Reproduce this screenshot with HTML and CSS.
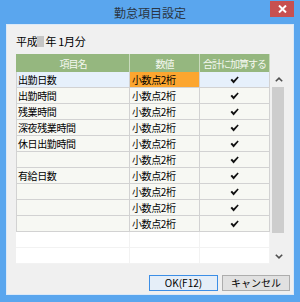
FILE: index.html
```html
<!DOCTYPE html>
<html lang="ja">
<head>
<meta charset="utf-8">
<title>勤怠項目設定</title>
<link rel="stylesheet" href="styles.css">
</head>
<body>
<div class="window">
  <div class="titlebar">
    <span class="title">勤怠項目設定</span>
    <div class="close"><svg width="9" height="8" viewBox="0 0 9 8"><path d="M1 0.5 L8 7.5 M8 0.5 L1 7.5" stroke="#fff" stroke-width="2"/></svg></div>
  </div>
  <div class="client">
    <div class="period">平成<span class="redact"></span>年 1月分</div>
    <div class="gridwrap">
      <div class="grid">
        <div class="hd">項目名</div><div class="hd">数値</div><div class="hd">合計に加算する</div>

        <div class="c sel">出勤日数</div><div class="c val">小数点2桁</div><div class="c sel chk"><svg class="ck" viewBox="0 0 9 8"><path d="M0.5 4 L2 2.8 L3.6 4.6 L7.6 0.5 L8.7 1.6 L3.6 7.4 Z" fill="#111"/></svg></div>

        <div class="c">出勤時間</div><div class="c">小数点2桁</div><div class="c chk"><svg class="ck" viewBox="0 0 9 8"><path d="M0.5 4 L2 2.8 L3.6 4.6 L7.6 0.5 L8.7 1.6 L3.6 7.4 Z" fill="#111"/></svg></div>

        <div class="c">残業時間</div><div class="c">小数点2桁</div><div class="c chk"><svg class="ck" viewBox="0 0 9 8"><path d="M0.5 4 L2 2.8 L3.6 4.6 L7.6 0.5 L8.7 1.6 L3.6 7.4 Z" fill="#111"/></svg></div>

        <div class="c">深夜残業時間</div><div class="c">小数点2桁</div><div class="c chk"><svg class="ck" viewBox="0 0 9 8"><path d="M0.5 4 L2 2.8 L3.6 4.6 L7.6 0.5 L8.7 1.6 L3.6 7.4 Z" fill="#111"/></svg></div>

        <div class="c">休日出勤時間</div><div class="c">小数点2桁</div><div class="c chk"><svg class="ck" viewBox="0 0 9 8"><path d="M0.5 4 L2 2.8 L3.6 4.6 L7.6 0.5 L8.7 1.6 L3.6 7.4 Z" fill="#111"/></svg></div>

        <div class="c"></div><div class="c">小数点2桁</div><div class="c chk"><svg class="ck" viewBox="0 0 9 8"><path d="M0.5 4 L2 2.8 L3.6 4.6 L7.6 0.5 L8.7 1.6 L3.6 7.4 Z" fill="#111"/></svg></div>

        <div class="c">有給日数</div><div class="c">小数点2桁</div><div class="c chk"><svg class="ck" viewBox="0 0 9 8"><path d="M0.5 4 L2 2.8 L3.6 4.6 L7.6 0.5 L8.7 1.6 L3.6 7.4 Z" fill="#111"/></svg></div>

        <div class="c"></div><div class="c">小数点2桁</div><div class="c chk"><svg class="ck" viewBox="0 0 9 8"><path d="M0.5 4 L2 2.8 L3.6 4.6 L7.6 0.5 L8.7 1.6 L3.6 7.4 Z" fill="#111"/></svg></div>

        <div class="c"></div><div class="c">小数点2桁</div><div class="c chk"><svg class="ck" viewBox="0 0 9 8"><path d="M0.5 4 L2 2.8 L3.6 4.6 L7.6 0.5 L8.7 1.6 L3.6 7.4 Z" fill="#111"/></svg></div>

        <div class="c"></div><div class="c">小数点2桁</div><div class="c chk"><svg class="ck" viewBox="0 0 9 8"><path d="M0.5 4 L2 2.8 L3.6 4.6 L7.6 0.5 L8.7 1.6 L3.6 7.4 Z" fill="#111"/></svg></div>

        <div class="e"></div><div class="e"></div><div class="e"></div>
        <div class="e"></div><div class="e"></div><div class="e"></div>
      </div>
      <div class="scrollbar">
        <div class="sbtn"><svg width="8" height="5" viewBox="0 0 8 5"><path d="M0.8 4.3 L4 1.2 L7.2 4.3" fill="none" stroke="#505050" stroke-width="1.6"/></svg></div>
        <div class="track"><div class="thumb"></div></div>
        <div class="sbtn"><svg width="8" height="5" viewBox="0 0 8 5"><path d="M0.8 0.7 L4 3.8 L7.2 0.7" fill="none" stroke="#505050" stroke-width="1.6"/></svg></div>
      </div>
    </div>
    <div class="buttons">
      <button class="btn ok">OK(F12)</button>
      <button class="btn">キャンセル</button>
    </div>
  </div>
</div>
</body>
</html>
```

FILE: styles.css
```css
* { box-sizing: border-box; }
html, body { margin: 0; padding: 0; }
body {
  width: 300px;
  height: 302px;
  font-family: "Noto Sans CJK JP", "Noto Sans", sans-serif;
  background: #5aa6ee;
}
.window {
  width: 300px;
  height: 302px;
  background: #5aa6ee;
  display: flex;
  flex-direction: column;
  padding: 0 6px 7px 6px;
  position: relative;
}
.titlebar {
  height: 24px;
  display: flex;
  align-items: center;
  justify-content: center;
}
.title {
  font-size: 12px;
  line-height: 14px;
  color: #2a3644;
  margin-top: 1px;
}
.close {
  position: absolute;
  top: 1px;
  right: 6px;
  width: 24px;
  height: 16px;
  background: #c75050;
  display: flex;
  align-items: center;
  justify-content: center;
}
.client {
  flex: 1;
  background: #f0f0f0;
  border: 1px solid #dbe9f8;
  display: flex;
  flex-direction: column;
  padding: 0 0 0 9px;
}
.period {
  font-size: 11px;
  line-height: 13px;
  color: #000;
  margin-top: 10px;
  height: 13px;
  display: flex;
  align-items: center;
  letter-spacing: -0.3px;
}
.redact {
  display: inline-block;
  width: 7px;
  height: 11px;
  background: #c4c4c4;
  margin: 0 1px 0 0;
}
.gridwrap {
  display: flex;
  margin-top: 6px;
}
.grid {
  width: 254px;
  display: grid;
  grid-template-columns: 114px 70px 70px;
  grid-template-rows: 18px repeat(12, 16px);
  font-size: 10px;
  line-height: 15px;
  letter-spacing: -0.4px;
  color: #000;
}
.hd {
  background: #95b77f;
  color: #f4f8f0;
  display: flex;
  align-items: center;
  justify-content: center;
  border-right: 1px solid #c9dbbd;
  font-size: 10px;
  white-space: nowrap;
  letter-spacing: -1px;
}
.hd:first-child { border-left: 1px solid #95b77f; }
.c {
  background: #f7f8f3;
  border-right: 1px solid #d2d2d2;
  border-bottom: 1px solid #d2d2d2;
  padding-left: 2px;
  white-space: nowrap;
  overflow: hidden;
}
.c:nth-child(3n+1) { border-left: 1px solid #d2d2d2; padding-left: 1px; }
.c.sel { background: #e6f0fb; }
.c.val { background: #fca62f; }
.chk {
  display: flex;
  align-items: center;
  justify-content: center;
  padding-left: 0;
}
.ck { width: 9px; height: 8px; }
.e {
  background: #fff;
  border-right: 1px solid #f2f2f2;
  border-bottom: 1px solid #f2f2f2;
}
.scrollbar {
  width: 17px;
  margin-top: 18px;
  height: 192px;
  background: #f0f0f0;
  display: flex;
  flex-direction: column;
}
.sbtn {
  height: 15px;
  display: flex;
  align-items: center;
  justify-content: center;
}
.track {
  flex: 1;
  padding: 0 3px 0 2px;
  display: flex;
  flex-direction: column;
}
.thumb {
  height: 146px;
  background: #cdcdcd;
}
.buttons {
  display: flex;
  justify-content: flex-end;
  gap: 4px;
  margin-top: 11px;
  padding-right: 3px;
}
.btn {
  font-family: "Noto Sans CJK JP", "Noto Sans", sans-serif;
  font-size: 10px;
  line-height: 14px;
  height: 16px;
  width: 68px;
  padding: 0;
  background: #e1e1e1;
  border: 1px solid #adadad;
  color: #000;
  display: flex;
  align-items: center;
  justify-content: center;
}
.btn.ok {
  width: 69px;
  border-color: #3c8ee6;
  background: #e5eef8;
}
```
